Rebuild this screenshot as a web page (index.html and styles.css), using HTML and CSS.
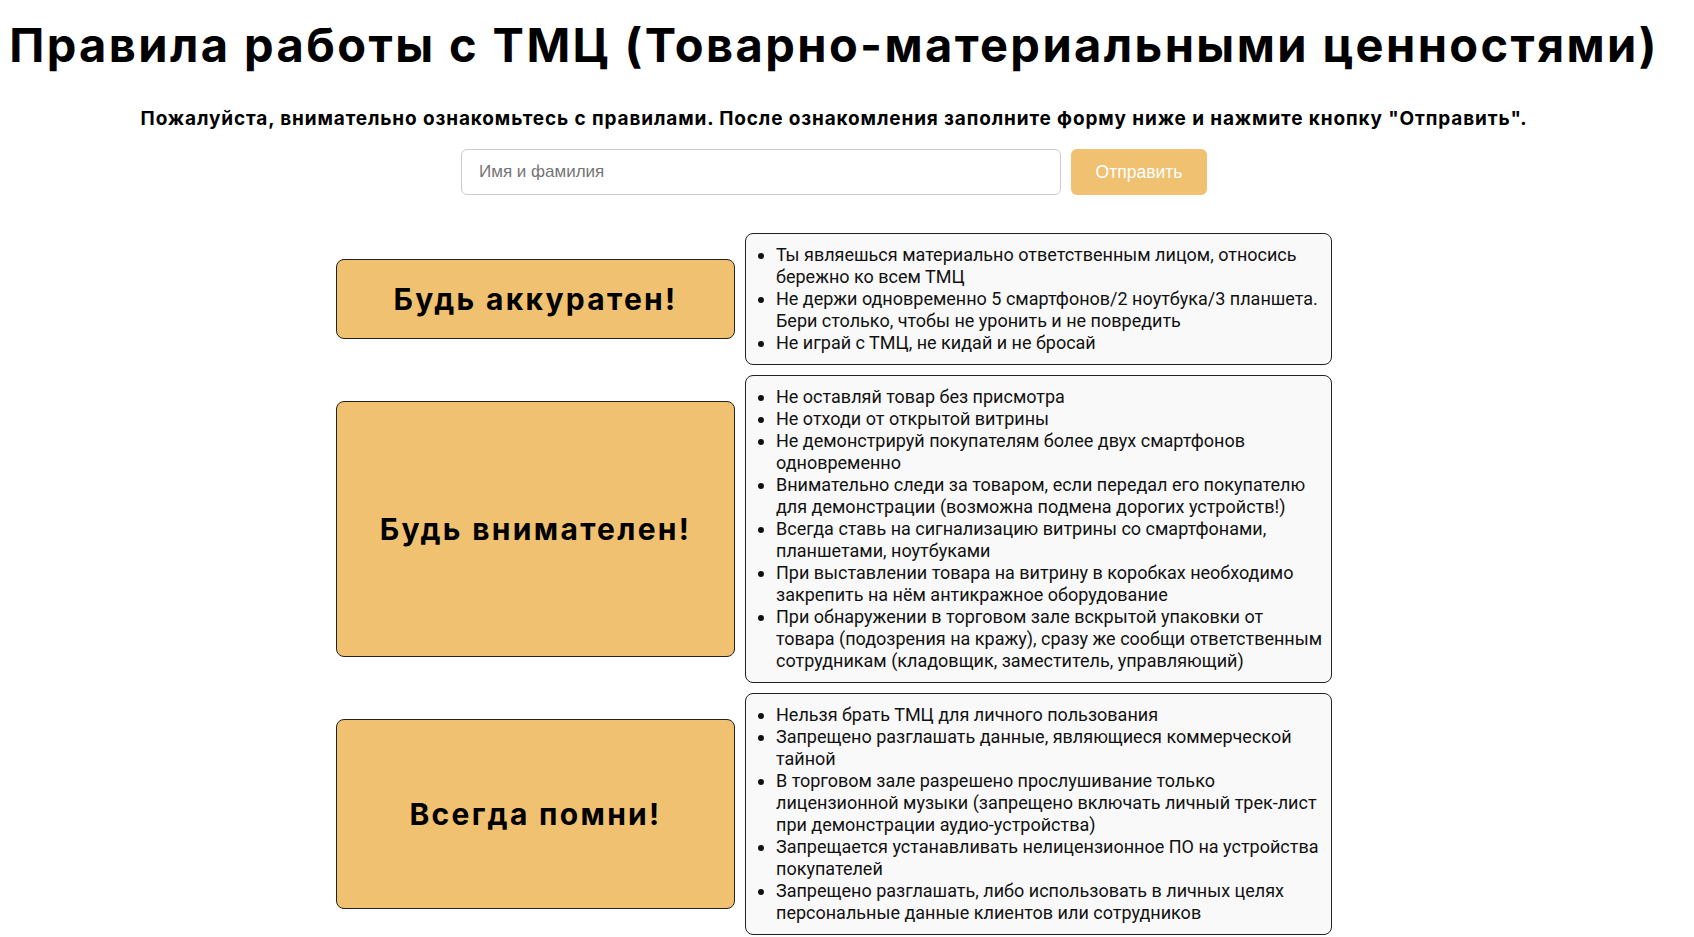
FILE: index.html
```html
<!DOCTYPE html>
<html lang="ru">
<head>
<meta charset="utf-8">
<title>Правила работы с ТМЦ</title>
<link rel="stylesheet" href="styles.css">
</head>
<body>
<div class="page">
  <h1 class="title">Правила работы с ТМЦ (Товарно-материальными ценностями)</h1>
  <p class="subtitle">Пожалуйста, внимательно ознакомьтесь с правилами. После ознакомления заполните форму ниже и нажмите кнопку "Отправить".</p>
  <form class="form">
    <input class="name-input" type="text" placeholder="Имя и фамилия">
    <button class="send-btn" type="button">Отправить</button>
  </form>
  <div class="rules">
    <div class="rule">
      <div class="rule-label">Будь аккуратен!</div>
      <div class="rule-body">
        <ul>
          <li>Ты являешься материально ответственным лицом, относись бережно ко всем ТМЦ</li>
          <li>Не держи одновременно 5 смартфонов/2 ноутбука/3 планшета. Бери столько, чтобы не уронить и не повредить</li>
          <li>Не играй с ТМЦ, не кидай и не бросай</li>
        </ul>
      </div>
    </div>
    <div class="rule">
      <div class="rule-label">Будь внимателен!</div>
      <div class="rule-body">
        <ul>
          <li>Не оставляй товар без присмотра</li>
          <li>Не отходи от открытой витрины</li>
          <li>Не демонстрируй покупателям более двух смартфонов одновременно</li>
          <li>Внимательно следи за товаром, если передал его покупателю для демонстрации (возможна подмена дорогих устройств!)</li>
          <li>Всегда ставь на сигнализацию витрины со смартфонами, планшетами, ноутбуками</li>
          <li>При выставлении товара на витрину в коробках необходимо закрепить на нём антикражное оборудование</li>
          <li>При обнаружении в торговом зале вскрытой упаковки от товара (подозрения на кражу), сразу же сообщи ответственным сотрудникам (кладовщик, заместитель, управляющий)</li>
        </ul>
      </div>
    </div>
    <div class="rule">
      <div class="rule-label">Всегда помни!</div>
      <div class="rule-body">
        <ul>
          <li>Нельзя брать ТМЦ для личного пользования</li>
          <li>Запрещено разглашать данные, являющиеся коммерческой тайной</li>
          <li>В торговом зале разрешено прослушивание только лицензионной музыки (запрещено включать личный трек-лист при демонстрации аудио-устройства)</li>
          <li>Запрещается устанавливать нелицензионное ПО на устройства покупателей</li>
          <li>Запрещено разглашать, либо использовать в личных целях персональные данные клиентов или сотрудников</li>
        </ul>
      </div>
    </div>
  </div>
</div>
</body>
</html>
```

FILE: styles.css
```css
html {
  overflow: hidden;
}

body {
  margin: 0;
  background: #ffffff;
  color: #000000;
  font-family: "Inter", "DejaVu Sans", sans-serif;
}

.page {
  width: 1668px;
  display: flex;
  flex-direction: column;
  align-items: center;
}

.title {
  margin: 17px 0 0;
  font-size: 47px;
  line-height: 56px;
  font-weight: 700;
  letter-spacing: 2.4px;
  white-space: nowrap;
  text-align: center;
}

.subtitle {
  margin: 34px 0 0;
  font-size: 19px;
  line-height: 23px;
  font-weight: 700;
  letter-spacing: 0.87px;
  white-space: nowrap;
  text-align: center;
}

.form {
  margin-top: 19px;
  display: flex;
  gap: 10px;
}

.name-input {
  box-sizing: border-box;
  width: 600px;
  height: 46px;
  padding: 0 17px;
  border: 1px solid #cccccc;
  border-radius: 6px;
  font-family: "Liberation Sans", Arial, sans-serif;
  font-size: 17px;
  color: #333333;
  background: #ffffff;
  outline: none;
}

.name-input::placeholder {
  color: #757575;
}

.send-btn {
  box-sizing: border-box;
  width: 136px;
  height: 46px;
  border: none;
  border-radius: 6px;
  background: #efc170;
  color: #ffffff;
  font-family: "Liberation Sans", Arial, sans-serif;
  font-size: 17.5px;
  cursor: pointer;
}

.rules {
  margin-top: 38px;
  width: 996px;
  display: flex;
  flex-direction: column;
  gap: 10px;
}

.rule {
  display: flex;
  gap: 10px;
}

.rule-label {
  box-sizing: border-box;
  width: 399px;
  flex: none;
  margin: 26px 0;
  display: flex;
  align-items: center;
  justify-content: center;
  background: #efc170;
  border: 1px solid #222222;
  border-radius: 8px;
  font-size: 30px;
  font-weight: 700;
  letter-spacing: 2.3px;
}

.rule-body {
  box-sizing: border-box;
  flex: 1;
  padding: 10px 6px 10px 10px;
  background: #f9f9f9;
  border: 1px solid #222222;
  border-radius: 8px;
  font-family: "Roboto", sans-serif;
  font-size: 18px;
  line-height: 22px;
  color: #111111;
}

.rule-body ul {
  margin: 0;
  padding-left: 20px;
}
```
